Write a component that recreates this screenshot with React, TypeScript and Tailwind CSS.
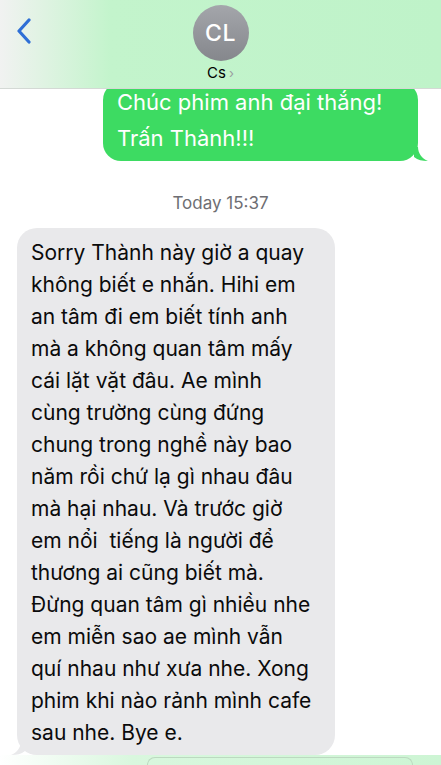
import React from 'react';

const sent = ['Chúc phim anh đại thắng!', 'Trấn Thành!!!'];

const received = [
  'Sorry Thành này giờ a quay',
  'không biết e nhắn. Hihi em',
  'an tâm đi em biết tính anh',
  'mà a không quan tâm mấy',
  'cái lặt vặt đâu. Ae mình',
  'cùng trường cùng đứng',
  'chung trong nghề này bao',
  'năm rồi chứ lạ gì nhau đâu',
  'mà hại nhau. Và trước giờ',
  'em nổi  tiếng là người để',
  'thương ai cũng biết mà.',
  'Đừng quan tâm gì nhiều nhe',
  'em miễn sao ae mình vẫn',
  'quí nhau như xưa nhe. Xong',
  'phim khi nào rảnh mình cafe',
  'sau nhe. Bye e.',
];

function Header() {
  return (
    <div className="relative z-10 h-[89px] border-b border-[#d4d9d5] bg-gradient-to-r from-[#f1f2f1] via-[#c3f4cc] via-25% to-[#bff3c9] flex flex-col items-center pt-[5px]">
      <svg className="absolute left-[16px] top-[18px]" width="16" height="26" viewBox="0 0 16 26">
        <path d="M13 2 L3 13 L13 24" fill="none" stroke="#2f6fd6" strokeWidth="3.2" strokeLinecap="round" strokeLinejoin="round" />
      </svg>
      <div className="w-[56px] h-[56px] rounded-full bg-gradient-to-b from-[#a4a6ab] to-[#85878c] flex items-center justify-center text-white text-[23px] font-medium tracking-[0.5px]">
        CL
      </div>
      <div className="mt-[2px] flex items-center gap-[3px] text-[15px] leading-[20px] text-black">
        <span>Cs</span>
        <span className="text-[#9a9c9f] text-[13px]">›</span>
      </div>
    </div>
  );
}

export default function App() {
  return (
    <div
      className="w-[441px] h-[765px] overflow-hidden bg-white flex flex-col"
      style={{ fontFamily: 'Inter, "Noto Sans", sans-serif' }}
    >
      <Header />
      <div className="flex-1 flex flex-col overflow-hidden">
        <div className="flex justify-end pr-[23px] -mt-[7px]">
          <div className="relative w-[315px] rounded-[18px] bg-[#3ddb62] pl-[14px] pt-[2px] pb-[5px] text-white text-[22px] leading-[36px]">
            {sent.map((l) => (
              <div key={l}>{l}</div>
            ))}
            <svg className="absolute right-[-10px] bottom-0" width="14" height="14" viewBox="0 0 14 14">
              <path d="M0 0 L4 0 C4 6 8 12 14 14 C8 14 4 13 0 10 Z" fill="#3ddb62" />
            </svg>
          </div>
        </div>
        <div className="mt-[32px] text-center text-[17px] leading-[20px] text-[#6e6e73]">Today 15:37</div>
        <div className="mt-[15px] pl-[17px]">
          <div className="relative w-[318px] rounded-[20px] bg-[#e9e9eb] pl-[14px] pt-[9px] pb-[6px] text-[#0b0b0b] text-[21px] leading-[32px]">
            {received.map((l, i) => (
              <div key={i} className="whitespace-pre">{l}</div>
            ))}
            <svg className="absolute left-[-6px] bottom-0" width="14" height="14" viewBox="0 0 14 14">
              <path d="M14 0 L10 0 C10 6 6 12 0 14 C6 14 10 13 14 10 Z" fill="#e9e9eb" />
            </svg>
          </div>
        </div>
        <div className="mt-auto h-[10px] shrink-0 bg-gradient-to-r from-white via-[#d9f7de] via-30% to-[#cdf5d4] flex pl-[147px] pr-[28px] pt-[2px]">
          <div className="flex-1 rounded-t-[14px] border border-b-0 border-[#bcd9c0]" />
        </div>
      </div>
    </div>
  );
}
